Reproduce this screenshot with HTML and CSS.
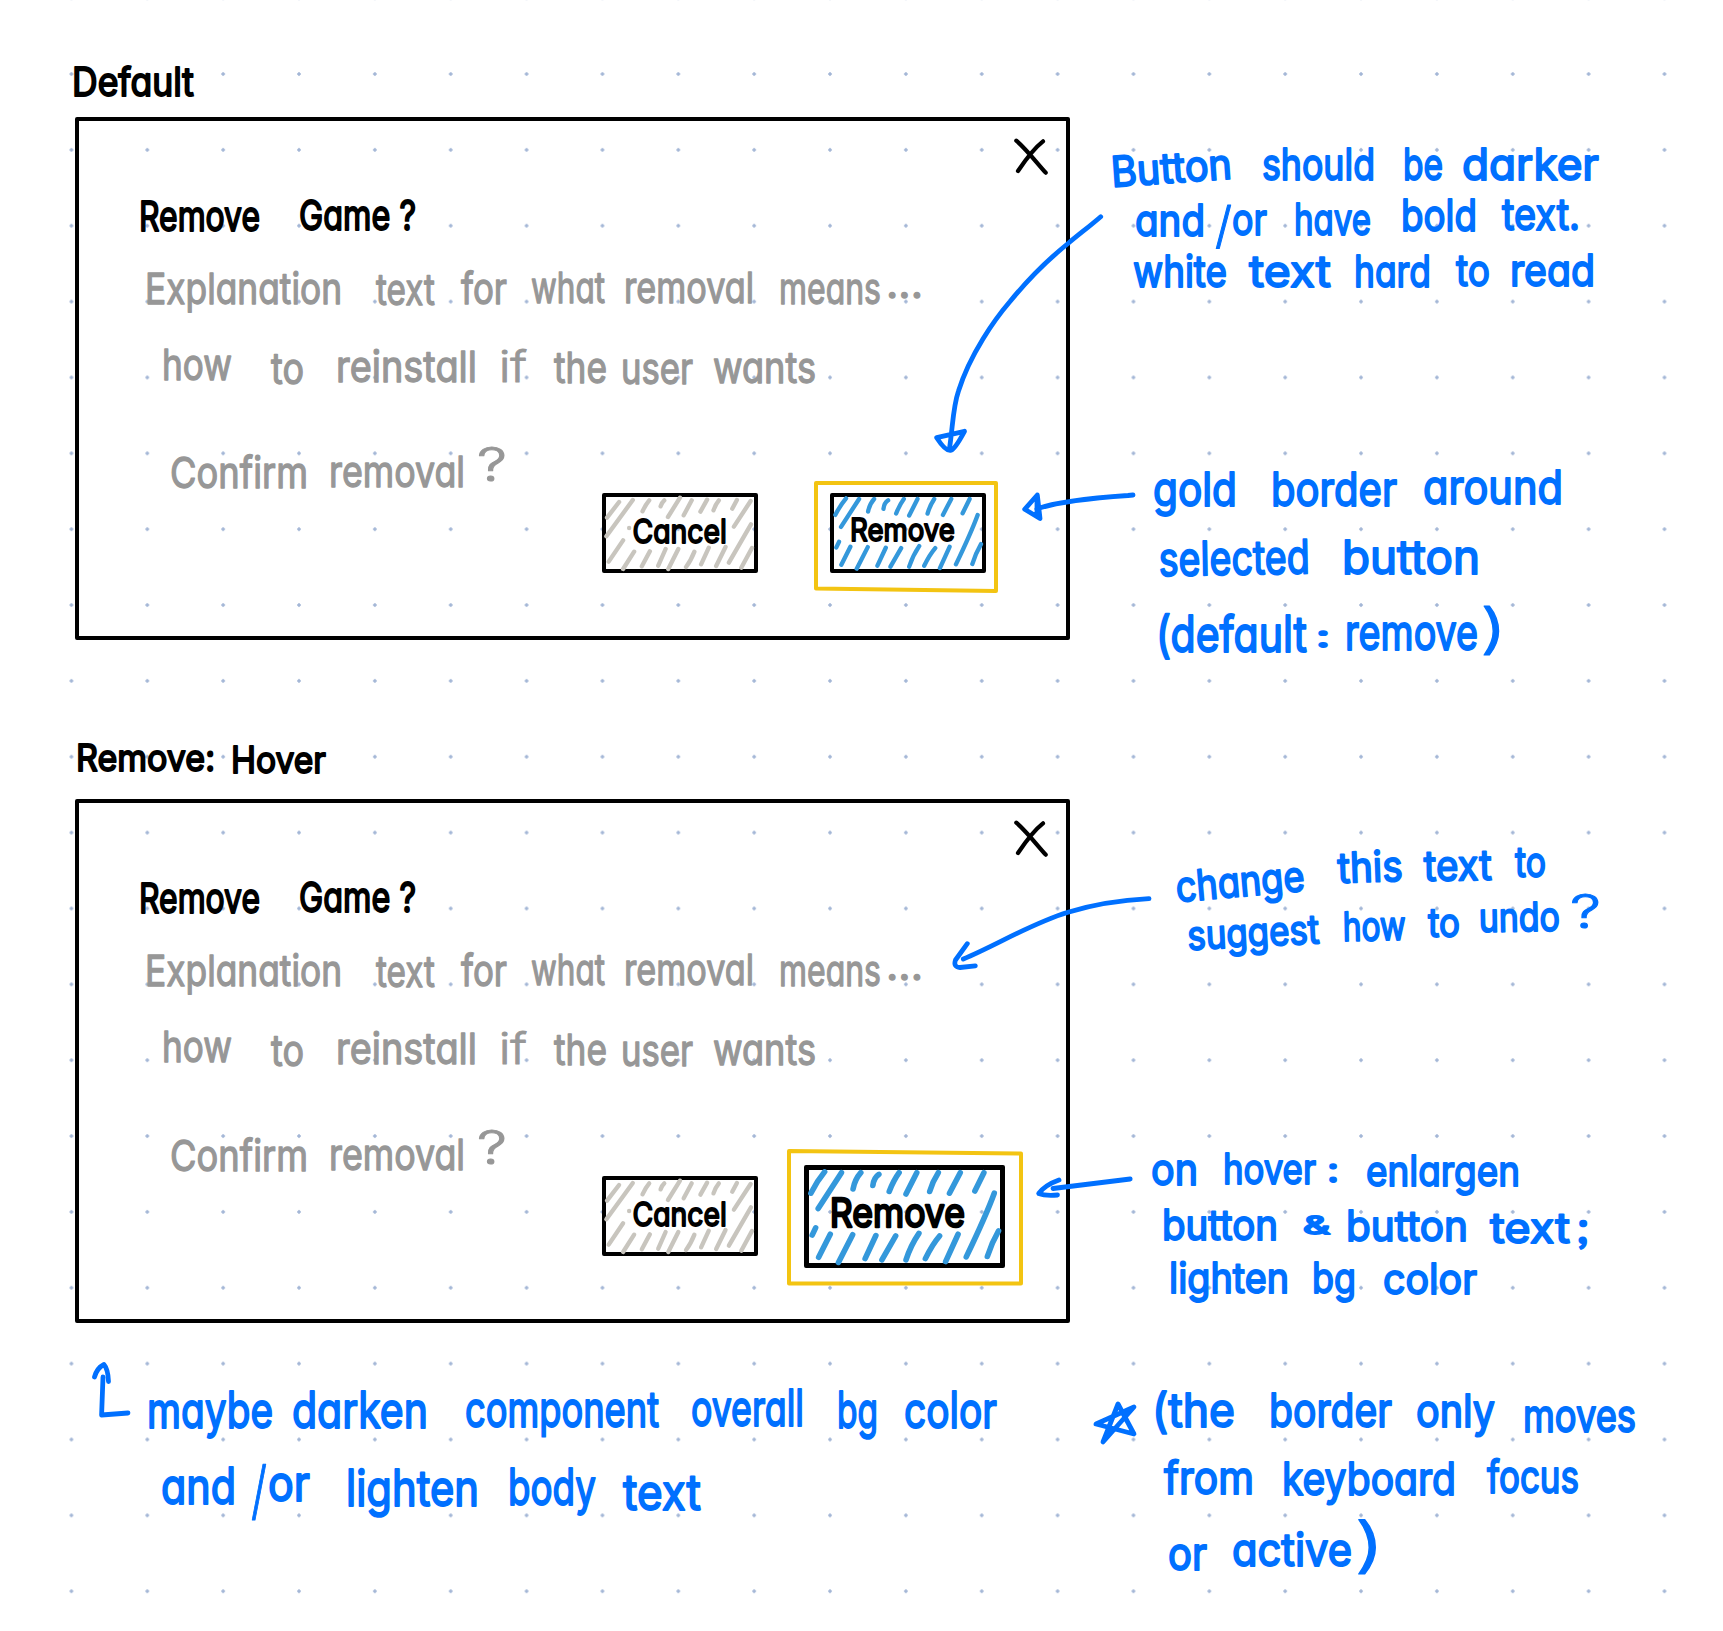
FILE: index.html
```html
<!DOCTYPE html>
<html lang="en">
<head>
<meta charset="utf-8">
<title>Remove Game dialog notes</title>
<link rel="stylesheet" href="styles.css">
</head>
<body>
<svg class="defs" width="0" height="0" aria-hidden="true">
  <defs>
    <symbol id="close" viewBox="1010 135 42 44"><path d="M1016.3 140.7C1026 149 1037 163 1045.7 172.7M1043 141.3C1033 149 1024 162 1018 171"/></symbol>
    <symbol id="hatch-cancel" viewBox="37 160 466 240" preserveAspectRatio="none"><path d="M88 187L52 234M129 181L50 290M178 182Q167 195 158 215M223 182Q216 188 212 200M270 174L234 232M305 182L281 227M351 180L331 216M386 182Q376 194 370 212M440 181L426 207M481 184L431 261M482 254L416 369M485 325L453 384M100 302L57 366M133 336L100 388M180 335L156 380M227 328L205 378M265 328L235 388M313 336Q302 364 288 382M356 324L333 374M406 322L378 379M118 265h.1"/></symbol>
    <symbol id="hatch-remove" viewBox="720 160 467 241" preserveAspectRatio="none"><path d="M768 176Q750 198 736 226M807 178L753 262M852 178Q838 194 834 216M894 182Q882 190 880 208M941 178Q928 196 918 222M982 178L957 228M1032 178Q1019 198 1012 222M1083 178L1058 226M1138 178L1117 221M1162 226Q1144 276 1097 375M1172 314Q1156 342 1146 374M747 307L739 324M781 322L754 376M833 323L800 388M887 325L862 379M933 326L901 382M987 320Q968 348 957 382M1035 326Q1018 346 1002 379M1078 322L1049 386"/></symbol>
  </defs>
</svg>
<main class="board">
  <section class="mockups">
    <h2 class="row"><svg class="ink black" viewBox="0 0 1080 117" width="1080" height="117">
      <text class="s39" x="72" y="96" textLength="122" lengthAdjust="spacingAndGlyphs">Default</text></svg></h2>

    <article class="dialog">
      <header class="row"><svg class="ink" viewBox="79 121 987 64" width="987" height="64"><use class="cross" href="#close" x="1010" y="135" width="42" height="44"/></svg></header>
      <h3 class="row"><svg class="ink black" viewBox="79 185 987 65" width="987" height="65">
        <text class="s41" x="139" y="231" textLength="121" lengthAdjust="spacingAndGlyphs">Remove</text>
        <text class="s41" x="299" y="230" textLength="117" lengthAdjust="spacingAndGlyphs">Game ?</text></svg></h3>
      <p class="row"><svg class="ink gray" viewBox="79 250 987 170" width="987" height="170">
        <text class="s43" x="145" y="304" textLength="197" lengthAdjust="spacingAndGlyphs">Explanation</text>
        <text class="s43" x="376" y="305" textLength="59" lengthAdjust="spacingAndGlyphs">text</text>
        <text class="s43" x="461" y="304" textLength="46" lengthAdjust="spacingAndGlyphs">for</text>
        <text class="s43" x="531" y="303" textLength="74" lengthAdjust="spacingAndGlyphs">what</text>
        <text class="s43" x="624" y="303" textLength="130" lengthAdjust="spacingAndGlyphs">removal</text>
        <text class="s43" x="779" y="304" textLength="102" lengthAdjust="spacingAndGlyphs">means</text>
        <text class="s43" x="886" y="298" textLength="37" lengthAdjust="spacingAndGlyphs">...</text>
        <text class="s43" x="162" y="380" textLength="70" lengthAdjust="spacingAndGlyphs">how</text>
        <text class="s43" x="271" y="384" textLength="33" lengthAdjust="spacingAndGlyphs">to</text>
        <text class="s43" x="336" y="382" textLength="141" lengthAdjust="spacingAndGlyphs">reinstall</text>
        <text class="s43 thin" x="499" y="382" textLength="28" lengthAdjust="spacingAndGlyphs">if</text>
        <text class="s43" x="554" y="383" textLength="53" lengthAdjust="spacingAndGlyphs">the</text>
        <text class="s43" x="621" y="384" textLength="72" lengthAdjust="spacingAndGlyphs">user</text>
        <text class="s43" x="713" y="383" textLength="103" lengthAdjust="spacingAndGlyphs">wants</text></svg></p>
      <footer class="actions">
        <svg class="ink gray" viewBox="79 420 523 216" width="523" height="216">
          <text class="s43" x="170" y="488" textLength="138" lengthAdjust="spacingAndGlyphs">Confirm</text>
          <text class="s43" x="329" y="487" textLength="136" lengthAdjust="spacingAndGlyphs">removal</text>
          <text class="s47 thin" x="477" y="481" textLength="30" lengthAdjust="spacingAndGlyphs">?</text></svg>
        <div class="button cancel"><svg class="ink face" viewBox="37 160 466 240" preserveAspectRatio="none">
          <use class="hatch" href="#hatch-cancel" x="37" y="160" width="466" height="240"/>
          <text class="label" x="128" y="309" textLength="282" lengthAdjust="spacingAndGlyphs">Cancel</text></svg></div>
        <div class="button remove"><svg class="ink face" viewBox="720 160 467 241" preserveAspectRatio="none">
          <use class="hatch blue-hatch" href="#hatch-remove" x="720" y="160" width="467" height="241"/>
          <text class="label small" x="780" y="304" textLength="314" lengthAdjust="spacingAndGlyphs">Remove</text></svg>
          <svg class="ring" viewBox="814 481 184 112" width="184" height="112"><path d="M816 483H996V591L816 588.5Z"/></svg></div>
      </footer>
    </article>

    <h2 class="row"><svg class="ink black" viewBox="0 640 1080 159" width="1080" height="159">
      <text class="s37" x="76" y="771" textLength="139" lengthAdjust="spacingAndGlyphs">Remove:</text>
      <text class="s37" x="231" y="773" textLength="95" lengthAdjust="spacingAndGlyphs">Hover</text></svg></h2>

    <article class="dialog hover-state">
      <header class="row"><svg class="ink" viewBox="79 121 987 64" width="987" height="64"><use class="cross" href="#close" x="1010" y="135" width="42" height="44"/></svg></header>
      <h3 class="row"><svg class="ink black" viewBox="79 185 987 65" width="987" height="65">
        <text class="s41" x="139" y="231" textLength="121" lengthAdjust="spacingAndGlyphs">Remove</text>
        <text class="s41" x="299" y="230" textLength="117" lengthAdjust="spacingAndGlyphs">Game ?</text></svg></h3>
      <p class="row"><svg class="ink gray" viewBox="79 250 987 171" width="987" height="171">
        <text class="s43" x="145" y="304" textLength="197" lengthAdjust="spacingAndGlyphs">Explanation</text>
        <text class="s43" x="376" y="305" textLength="59" lengthAdjust="spacingAndGlyphs">text</text>
        <text class="s43" x="461" y="304" textLength="46" lengthAdjust="spacingAndGlyphs">for</text>
        <text class="s43" x="531" y="303" textLength="74" lengthAdjust="spacingAndGlyphs">what</text>
        <text class="s43" x="624" y="303" textLength="130" lengthAdjust="spacingAndGlyphs">removal</text>
        <text class="s43" x="779" y="304" textLength="102" lengthAdjust="spacingAndGlyphs">means</text>
        <text class="s43" x="886" y="298" textLength="37" lengthAdjust="spacingAndGlyphs">...</text>
        <text class="s43" x="162" y="380" textLength="70" lengthAdjust="spacingAndGlyphs">how</text>
        <text class="s43" x="271" y="384" textLength="33" lengthAdjust="spacingAndGlyphs">to</text>
        <text class="s43" x="336" y="382" textLength="141" lengthAdjust="spacingAndGlyphs">reinstall</text>
        <text class="s43 thin" x="499" y="382" textLength="28" lengthAdjust="spacingAndGlyphs">if</text>
        <text class="s43" x="554" y="383" textLength="53" lengthAdjust="spacingAndGlyphs">the</text>
        <text class="s43" x="621" y="384" textLength="72" lengthAdjust="spacingAndGlyphs">user</text>
        <text class="s43" x="713" y="383" textLength="103" lengthAdjust="spacingAndGlyphs">wants</text></svg></p>
      <footer class="actions">
        <svg class="ink gray" viewBox="79 420 523 216" width="523" height="216">
          <text class="s43" x="170" y="488" textLength="138" lengthAdjust="spacingAndGlyphs">Confirm</text>
          <text class="s43" x="329" y="487" textLength="136" lengthAdjust="spacingAndGlyphs">removal</text>
          <text class="s47 thin" x="477" y="481" textLength="30" lengthAdjust="spacingAndGlyphs">?</text></svg>
        <div class="button cancel"><svg class="ink face" viewBox="37 160 466 240" preserveAspectRatio="none">
          <use class="hatch" href="#hatch-cancel" x="37" y="160" width="466" height="240"/>
          <text class="label" x="128" y="309" textLength="282" lengthAdjust="spacingAndGlyphs">Cancel</text></svg></div>
        <div class="button remove hovered"><svg class="ink face" viewBox="720 160 467 241" preserveAspectRatio="none">
          <use class="hatch blue-hatch" href="#hatch-remove" x="720" y="160" width="467" height="241"/>
          <text class="label small" x="780" y="304" textLength="314" lengthAdjust="spacingAndGlyphs">Remove</text></svg>
          <svg class="ring" viewBox="787 1149 236 137" width="236" height="137"><path d="M789 1151L1021 1153.5V1283.5H789Z"/></svg></div>
      </footer>
    </article>

    <p class="row"><svg class="ink blue" viewBox="0 1323 1080 308" width="1080" height="308">
      <text class="s50" x="147" y="1428" textLength="126" lengthAdjust="spacingAndGlyphs">maybe</text>
      <text class="s50" x="292" y="1428" textLength="136" lengthAdjust="spacingAndGlyphs">darken</text>
      <text class="s50" x="465" y="1427" textLength="194" lengthAdjust="spacingAndGlyphs">component</text>
      <text class="s50" x="691" y="1426" textLength="113" lengthAdjust="spacingAndGlyphs">overall</text>
      <text class="s50" x="837" y="1428" textLength="41" lengthAdjust="spacingAndGlyphs">bg</text>
      <text class="s50" x="904" y="1428" textLength="93" lengthAdjust="spacingAndGlyphs">color</text>
      <text class="s50" x="161" y="1504" textLength="75" lengthAdjust="spacingAndGlyphs">and</text>
      <text class="s64 thin" x="251" y="1513" textLength="16" lengthAdjust="spacingAndGlyphs">/</text>
      <text class="s50" x="268" y="1501" textLength="42" lengthAdjust="spacingAndGlyphs">or</text>
      <text class="s50" x="346" y="1506" textLength="133" lengthAdjust="spacingAndGlyphs">lighten</text>
      <text class="s50" x="508" y="1505" textLength="88" lengthAdjust="spacingAndGlyphs">body</text>
      <text class="s50" x="623" y="1510" textLength="78" lengthAdjust="spacingAndGlyphs">text</text></svg></p>
  </section>

  <aside class="notes">
    <svg class="ink blue" viewBox="1080 0 643 400" width="643" height="400">
      <text class="s42" transform="rotate(-4 1112 187)" x="1112" y="187" textLength="121" lengthAdjust="spacingAndGlyphs">Button</text>
      <text class="s44" x="1262" y="180" textLength="113" lengthAdjust="spacingAndGlyphs">should</text>
      <text class="s44" x="1403" y="180" textLength="40" lengthAdjust="spacingAndGlyphs">be</text>
      <text class="s44" x="1462" y="180" textLength="137" lengthAdjust="spacingAndGlyphs">darker</text>
      <text class="s44" x="1135" y="236" textLength="70" lengthAdjust="spacingAndGlyphs">and</text>
      <text class="s50 thin" x="1215" y="243" textLength="17" lengthAdjust="spacingAndGlyphs">/</text>
      <text class="s44" x="1232" y="235" textLength="35" lengthAdjust="spacingAndGlyphs">or</text>
      <text class="s44" x="1294" y="235" textLength="77" lengthAdjust="spacingAndGlyphs">have</text>
      <text class="s44" x="1401" y="231" textLength="76" lengthAdjust="spacingAndGlyphs">bold</text>
      <text class="s44" x="1502" y="230" textLength="78" lengthAdjust="spacingAndGlyphs">text.</text>
      <text class="s44" x="1133" y="287" textLength="94" lengthAdjust="spacingAndGlyphs">white</text>
      <text class="s44" x="1249" y="287" textLength="82" lengthAdjust="spacingAndGlyphs">text</text>
      <text class="s44" x="1354" y="287" textLength="77" lengthAdjust="spacingAndGlyphs">hard</text>
      <text class="s44" x="1456" y="286" textLength="34" lengthAdjust="spacingAndGlyphs">to</text>
      <text class="s44" x="1510" y="286" textLength="85" lengthAdjust="spacingAndGlyphs">read</text></svg>
    <svg class="ink blue" viewBox="1080 400 643 400" width="643" height="400">
      <text class="s47" x="1153" y="506" textLength="84" lengthAdjust="spacingAndGlyphs">gold</text>
      <text class="s47" x="1271" y="506" textLength="126" lengthAdjust="spacingAndGlyphs">border</text>
      <text class="s47" x="1423" y="504" textLength="140" lengthAdjust="spacingAndGlyphs">around</text>
      <text class="s47" transform="rotate(-1 1159 576)" x="1159" y="576" textLength="151" lengthAdjust="spacingAndGlyphs">selected</text>
      <text class="s47" x="1342" y="574" textLength="138" lengthAdjust="spacingAndGlyphs">button</text>
      <text class="s50" x="1156" y="652" textLength="151" lengthAdjust="spacingAndGlyphs">(default</text>
      <text class="s30" x="1316" y="647" textLength="14" lengthAdjust="spacingAndGlyphs">:</text>
      <text class="s50" x="1345" y="650" textLength="133" lengthAdjust="spacingAndGlyphs">remove</text>
      <text class="s54 thin" x="1480" y="648" textLength="27" lengthAdjust="spacingAndGlyphs">)</text></svg>
    <svg class="ink blue" viewBox="1080 800 643 300" width="643" height="300">
      <text class="s42" transform="rotate(-5 1177 902)" x="1177" y="902" textLength="129" lengthAdjust="spacingAndGlyphs">change</text>
      <text class="s42" transform="rotate(-2 1338 883)" x="1338" y="883" textLength="65" lengthAdjust="spacingAndGlyphs">this</text>
      <text class="s42" transform="rotate(-1 1424 881)" x="1424" y="881" textLength="68" lengthAdjust="spacingAndGlyphs">text</text>
      <text class="s42" x="1515" y="877" textLength="31" lengthAdjust="spacingAndGlyphs">to</text>
      <text class="s40" transform="rotate(-3 1188 950)" x="1188" y="950" textLength="132" lengthAdjust="spacingAndGlyphs">suggest</text>
      <text class="s40" transform="rotate(-1 1343 941)" x="1343" y="941" textLength="63" lengthAdjust="spacingAndGlyphs">how</text>
      <text class="s40" x="1428" y="937" textLength="32" lengthAdjust="spacingAndGlyphs">to</text>
      <text class="s40" transform="rotate(-1 1479 932)" x="1479" y="932" textLength="81" lengthAdjust="spacingAndGlyphs">undo</text>
      <text class="s47 thin" x="1570" y="928" textLength="31" lengthAdjust="spacingAndGlyphs">?</text></svg>
    <svg class="ink blue" viewBox="1080 1100 643 240" width="643" height="240">
      <text class="s44" x="1151" y="1185" textLength="47" lengthAdjust="spacingAndGlyphs">on</text>
      <text class="s42" x="1223" y="1184" textLength="93" lengthAdjust="spacingAndGlyphs">hover</text>
      <text class="s34" x="1327" y="1182" textLength="12" lengthAdjust="spacingAndGlyphs">:</text>
      <text class="s42" x="1366" y="1186" textLength="154" lengthAdjust="spacingAndGlyphs">enlargen</text>
      <text class="s42" x="1162" y="1240" textLength="116" lengthAdjust="spacingAndGlyphs">button</text>
      <text class="s24" x="1303" y="1234" textLength="27" lengthAdjust="spacingAndGlyphs">&amp;</text>
      <text class="s42" x="1346" y="1241" textLength="122" lengthAdjust="spacingAndGlyphs">button</text>
      <text class="s42" x="1490" y="1243" textLength="80" lengthAdjust="spacingAndGlyphs">text</text>
      <text class="s42" x="1576" y="1243" textLength="13" lengthAdjust="spacingAndGlyphs">;</text>
      <text class="s42" x="1169" y="1293" textLength="120" lengthAdjust="spacingAndGlyphs">lighten</text>
      <text class="s42" x="1312" y="1293" textLength="44" lengthAdjust="spacingAndGlyphs">bg</text>
      <text class="s42" x="1383" y="1294" textLength="94" lengthAdjust="spacingAndGlyphs">color</text></svg>
    <svg class="ink blue" viewBox="1080 1340 643 291" width="643" height="291">
      <text class="s47" x="1152" y="1427" textLength="83" lengthAdjust="spacingAndGlyphs">(the</text>
      <text class="s47" x="1269" y="1427" textLength="123" lengthAdjust="spacingAndGlyphs">border</text>
      <text class="s45" x="1416" y="1427" textLength="79" lengthAdjust="spacingAndGlyphs">only</text>
      <text class="s45" x="1523" y="1432" textLength="113" lengthAdjust="spacingAndGlyphs">moves</text>
      <text class="s45" x="1164" y="1494" textLength="90" lengthAdjust="spacingAndGlyphs">from</text>
      <text class="s45" x="1282" y="1495" textLength="174" lengthAdjust="spacingAndGlyphs">keyboard</text>
      <text class="s45" x="1487" y="1493" textLength="92" lengthAdjust="spacingAndGlyphs">focus</text>
      <text class="s45" x="1168" y="1570" textLength="39" lengthAdjust="spacingAndGlyphs">or</text>
      <text class="s45" x="1232" y="1566" textLength="120" lengthAdjust="spacingAndGlyphs">active</text>
      <text class="s60 thin" x="1354" y="1566" textLength="31" lengthAdjust="spacingAndGlyphs">)</text></svg>
  </aside>
</main>
<svg class="arrows" viewBox="0 0 1723 1631" width="1723" height="1631" aria-hidden="true">
  <path d="M1100.7 216.7C1090 226 1078 235 1068 243.5C1050 258 1030 277 1010 301.5C995 319 970 354 958.5 391C953 407 953 424 949.7 447M936.7 437.7L964.5 431.3Q955 449 951 450.3Q946 452 936.7 437.7"/>
  <path d="M1133 495L1128 495.5Q1062 500 1036.7 509M1037.3 495L1024.7 509.3L1040 518.5ZM1037 499V516"/>
  <path d="M1149 898.7Q1105 901 1068 912.3C1030 924 995 946 963.3 959M967.3 943.7L955.5 960Q953 967 960 967.5L975.3 965.8"/>
  <path d="M1130.2 1179L1053 1188.5M1059 1180Q1045 1185 1038.7 1193.5Q1045 1196 1057.5 1195"/>
  <path d="M128 1413L101.6 1415L103 1377M94.5 1377Q97 1368 104 1364.5Q108 1369 108.5 1381.5"/>
  <path d="M1103 1442L1118 1404L1134 1434L1096 1424L1134 1407Z"/>
</svg>
</body>
</html>
```
FILE: styles.css
```css
* { box-sizing: border-box; }

body {
  margin: 0;
  width: 1723px;
  height: 1631px;
  overflow: hidden;
  position: relative;
  font-family: Inter, "Open Sans", sans-serif;
  background-color: #fff;
  background-image: radial-gradient(circle at center, #a3b6d6 0, #a3b6d6 1.4px, transparent 2.1px);
  background-size: 75.86px 75.86px;
  background-position: 33.5px 36.1px;
}

svg { display: block; overflow: visible; }
.defs { position: absolute; }

.board { display: flex; }
.mockups { width: 1080px; }
.notes { width: 643px; display: flex; flex-direction: column; }
.row { margin: 0; font-size: 0; }

.dialog {
  width: 995px;
  height: 523px;
  margin-left: 75px;
  border: 4px solid #000;
  border-radius: 2px;
  display: flex;
  flex-direction: column;
}
.hover-state { height: 524px; }

.actions { display: flex; align-items: flex-start; }

.button {
  position: relative;
  flex: none;
  border: 4px solid #000;
  border-radius: 2px;
  background: transparent;
}
.cancel { width: 156px; height: 80px; margin-top: 73px; }
.remove { width: 156px; height: 80px; margin: 73px 0 0 72px; }
.remove.hovered { width: 201px; height: 103px; margin: 62px 0 0 46px; border-width: 5px; }

.face { width: 156px; height: 80px; margin: -4px; }
.hovered .face { width: 201px; height: 103px; margin: -5px; }

.ring {
  position: absolute;
  left: -20px;
  top: -16px;
  fill: none;
  stroke: #f3c412;
  stroke-width: 4;
  stroke-linejoin: round;
}
.hovered .ring { left: -22px; top: -21px; }

/* Pen strokes: round joins soften the letterforms */
.ink text {
  font-family: Inter, "Open Sans", sans-serif;
  font-feature-settings: "cv11" 1, "ss03" 1;
  font-weight: 400;
  stroke-width: 1.9px;
  stroke-linejoin: round;
}
.black text, .ink .label { fill: #000; stroke: #000; }
.gray text { fill: #979797; stroke: #979797; stroke-width: 1.3px; }
.blue text { fill: #0070ff; stroke: #0070ff; }
.ink .thin { font-weight: 300; stroke-width: 1px; }

.cross { fill: none; stroke: #000; stroke-width: 4.2; stroke-linecap: round; }
.hatch { fill: none; stroke: #c8c5be; stroke-width: 13; stroke-linecap: round; }
.blue-hatch { stroke: #3498db; }
.ink .label { font-size: 98px; stroke-width: 5.5px; }
.ink .small { font-size: 92px; }

.arrows {
  position: absolute;
  inset: 0;
  pointer-events: none;
  fill: none;
  stroke: #0070ff;
  stroke-width: 4.8;
  stroke-linecap: round;
  stroke-linejoin: round;
}

.s24 { font-size: 24px; }
.s30 { font-size: 30px; }
.s34 { font-size: 34px; }
.s37 { font-size: 37px; }
.s39 { font-size: 39px; }
.s40 { font-size: 40px; }
.s41 { font-size: 41px; }
.s42 { font-size: 42px; }
.s43 { font-size: 43px; }
.s44 { font-size: 44px; }
.s45 { font-size: 45px; }
.s47 { font-size: 47px; }
.s50 { font-size: 50px; }
.s54 { font-size: 54px; }
.s60 { font-size: 60px; }
.s64 { font-size: 64px; }
```
